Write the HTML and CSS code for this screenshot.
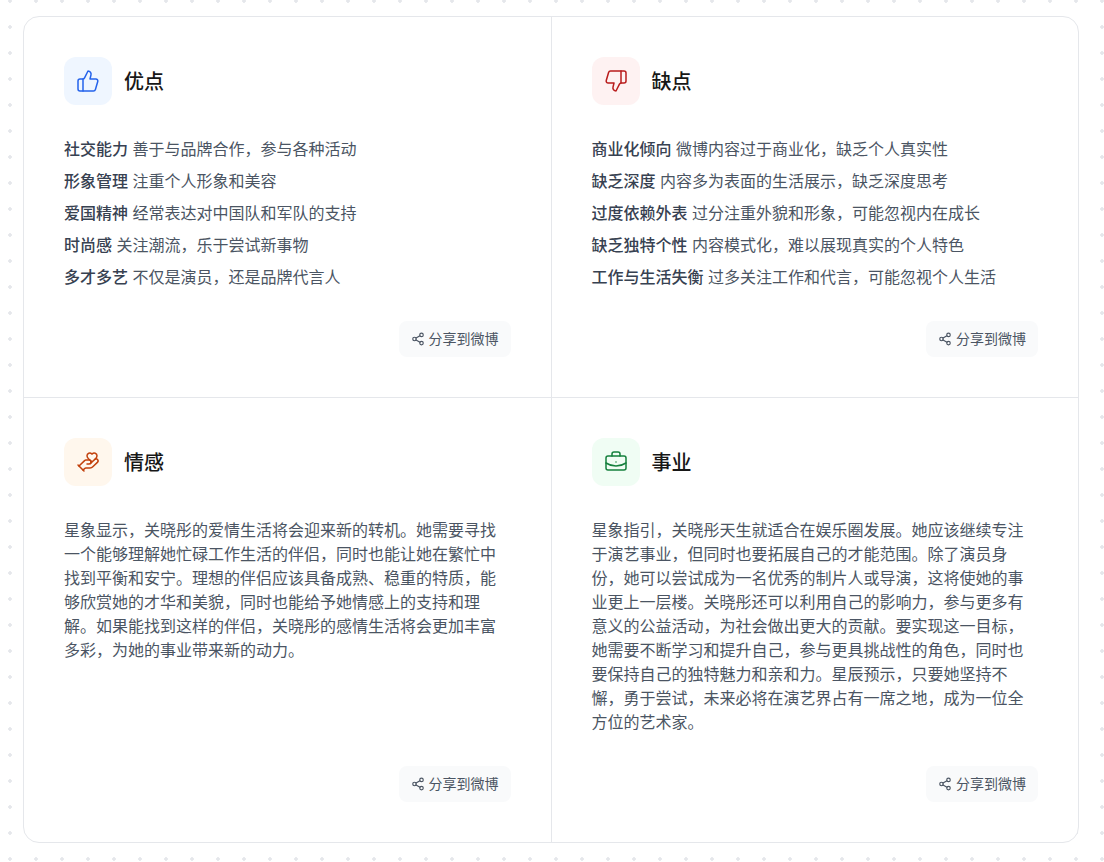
FILE: index.html
```html
<!DOCTYPE html>
<html lang="zh-CN">
<head>
<meta charset="utf-8">
<title>星象分析</title>
<link rel="stylesheet" href="styles.css">
</head>
<body>
<main class="card">
  <section class="cell cell-r cell-b">
    <header class="head">
      <span class="badge badge-blue">
        <svg class="icon" viewBox="0 0 24 24" fill="none" stroke="currentColor" stroke-width="1.5" stroke-linecap="round" stroke-linejoin="round"><path d="M7 10v12"/><path d="M15 5.88 14 10h5.83a2 2 0 0 1 1.92 2.56l-2.33 8A2 2 0 0 1 17.5 22H4a2 2 0 0 1-2-2v-8a2 2 0 0 1 2-2h2.76a2 2 0 0 0 1.79-1.11L12 2a3.13 3.13 0 0 1 3 3.88Z"/></svg>
      </span>
      <h2 class="title">优点</h2>
    </header>
    <ul class="list">
      <li><b>社交能力</b> 善于与品牌合作，参与各种活动</li>
      <li><b>形象管理</b> 注重个人形象和美容</li>
      <li><b>爱国精神</b> 经常表达对中国队和军队的支持</li>
      <li><b>时尚感</b> 关注潮流，乐于尝试新事物</li>
      <li><b>多才多艺</b> 不仅是演员，还是品牌代言人</li>
    </ul>
    <div class="foot"><button class="share"><svg class="share-icon" viewBox="0 0 24 24" fill="none" stroke="currentColor" stroke-width="2" stroke-linecap="round" stroke-linejoin="round"><circle cx="18" cy="5" r="3"/><circle cx="6" cy="12" r="3"/><circle cx="18" cy="19" r="3"/><path d="m8.59 13.51 6.83 3.98"/><path d="m15.41 6.51-6.82 3.98"/></svg>分享到微博</button></div>
  </section>
  <section class="cell cell-b">
    <header class="head">
      <span class="badge badge-red">
        <svg class="icon" viewBox="0 0 24 24" fill="none" stroke="currentColor" stroke-width="1.5" stroke-linecap="round" stroke-linejoin="round"><path d="M17 14V2"/><path d="M9 18.12 10 14H4.17a2 2 0 0 1-1.92-2.56l2.33-8A2 2 0 0 1 6.5 2H20a2 2 0 0 1 2 2v8a2 2 0 0 1-2 2h-2.76a2 2 0 0 0-1.79 1.11L12 22a3.13 3.13 0 0 1-3-3.88Z"/></svg>
      </span>
      <h2 class="title">缺点</h2>
    </header>
    <ul class="list">
      <li><b>商业化倾向</b> 微博内容过于商业化，缺乏个人真实性</li>
      <li><b>缺乏深度</b> 内容多为表面的生活展示，缺乏深度思考</li>
      <li><b>过度依赖外表</b> 过分注重外貌和形象，可能忽视内在成长</li>
      <li><b>缺乏独特个性</b> 内容模式化，难以展现真实的个人特色</li>
      <li><b>工作与生活失衡</b> 过多关注工作和代言，可能忽视个人生活</li>
    </ul>
    <div class="foot"><button class="share"><svg class="share-icon" viewBox="0 0 24 24" fill="none" stroke="currentColor" stroke-width="2" stroke-linecap="round" stroke-linejoin="round"><circle cx="18" cy="5" r="3"/><circle cx="6" cy="12" r="3"/><circle cx="18" cy="19" r="3"/><path d="m8.59 13.51 6.83 3.98"/><path d="m15.41 6.51-6.82 3.98"/></svg>分享到微博</button></div>
  </section>
  <section class="cell cell-r">
    <header class="head">
      <span class="badge badge-orange">
        <svg class="icon" viewBox="0 0 24 24" fill="none" stroke="currentColor" stroke-width="1.5" stroke-linecap="round" stroke-linejoin="round"><path d="M11 14h2a2 2 0 0 0 0-4h-3c-.6 0-1.1.2-1.4.6L3 16"/><path d="m14.45 13.39 5.05-4.694C20.196 8 21 6.85 21 5.75a2.75 2.75 0 0 0-4.797-1.837.276.276 0 0 1-.406 0A2.75 2.75 0 0 0 11 5.75c0 1.2.802 2.248 1.5 2.946L16 11.95"/><path d="m2 15 6 6"/><path d="m7 20 1.6-1.4c.3-.4.8-.6 1.4-.6h4c1.1 0 2.1-.4 2.8-1.2l4.6-4.4a1 1 0 0 0-2.75-2.91"/></svg>
      </span>
      <h2 class="title">情感</h2>
    </header>
    <p class="text">星象显示，关晓彤的爱情生活将会迎来新的转机。她需要寻找一个能够理解她忙碌工作生活的伴侣，同时也能让她在繁忙中找到平衡和安宁。理想的伴侣应该具备成熟、稳重的特质，能够欣赏她的才华和美貌，同时也能给予她情感上的支持和理解。如果能找到这样的伴侣，关晓彤的感情生活将会更加丰富多彩，为她的事业带来新的动力。</p>
    <div class="foot"><button class="share"><svg class="share-icon" viewBox="0 0 24 24" fill="none" stroke="currentColor" stroke-width="2" stroke-linecap="round" stroke-linejoin="round"><circle cx="18" cy="5" r="3"/><circle cx="6" cy="12" r="3"/><circle cx="18" cy="19" r="3"/><path d="m8.59 13.51 6.83 3.98"/><path d="m15.41 6.51-6.82 3.98"/></svg>分享到微博</button></div>
  </section>
  <section class="cell">
    <header class="head">
      <span class="badge badge-green">
        <svg class="icon" viewBox="0 0 24 24" fill="none" stroke="currentColor" stroke-width="1.5" stroke-linecap="round" stroke-linejoin="round"><path d="M12 12h.01"/><path d="M16 6V4a2 2 0 0 0-2-2h-4a2 2 0 0 0-2 2v2"/><path d="M22 13a18.15 18.15 0 0 1-20 0"/><rect width="20" height="14" x="2" y="6" rx="2"/></svg>
      </span>
      <h2 class="title">事业</h2>
    </header>
    <p class="text">星象指引，关晓彤天生就适合在娱乐圈发展。她应该继续专注于演艺事业，但同时也要拓展自己的才能范围。除了演员身份，她可以尝试成为一名优秀的制片人或导演，这将使她的事业更上一层楼。关晓彤还可以利用自己的影响力，参与更多有意义的公益活动，为社会做出更大的贡献。要实现这一目标，她需要不断学习和提升自己，参与更具挑战性的角色，同时也要保持自己的独特魅力和亲和力。星辰预示，只要她坚持不懈，勇于尝试，未来必将在演艺界占有一席之地，成为一位全方位的艺术家。</p>
    <div class="foot"><button class="share"><svg class="share-icon" viewBox="0 0 24 24" fill="none" stroke="currentColor" stroke-width="2" stroke-linecap="round" stroke-linejoin="round"><circle cx="18" cy="5" r="3"/><circle cx="6" cy="12" r="3"/><circle cx="18" cy="19" r="3"/><path d="m8.59 13.51 6.83 3.98"/><path d="m15.41 6.51-6.82 3.98"/></svg>分享到微博</button></div>
  </section>
</main>
</body>
</html>
```
FILE: styles.css
```css
* { box-sizing: border-box; }
html, body { margin: 0; }
body {
  height: 862px;
  overflow: hidden;
  padding: 16px 25px 0 23px;
  background-color: #fff;
  background-image: radial-gradient(circle, #e5e7eb 1.5px, transparent 2px);
  background-size: 26px 26px;
  background-position: 23px 14px;
  font-family: Inter, "Noto Sans CJK SC", sans-serif;
  color: #4b5563;
}
.card {
  display: grid;
  grid-template-columns: 527.5px 1fr;
  background: #fff;
  border: 1px solid #e5e7eb;
  border-radius: 16px;
}
.cell {
  display: flex;
  flex-direction: column;
  padding: 40px;
}
.cell-r { border-right: 1px solid #e5e7eb; }
.cell-b { border-bottom: 1px solid #e5e7eb; }
.head {
  display: flex;
  align-items: center;
  gap: 12px;
  margin-bottom: 32px;
}
.badge {
  display: flex;
  align-items: center;
  justify-content: center;
  width: 48px;
  height: 48px;
  border-radius: 12px;
}
.badge-blue { background: #eff6ff; color: #2563eb; }
.badge-red { background: #fef2f2; color: #b91c1c; }
.badge-orange { background: #fff7ed; color: #c2410c; }
.badge-green { background: #f0fdf4; color: #15803d; }
.icon { width: 24px; height: 24px; }
.title {
  margin: 0;
  padding-top: 2px;
  font-size: 20px;
  line-height: 28px;
  font-weight: 500;
  color: #171717;
}
.list {
  display: flex;
  flex-direction: column;
  gap: 8px;
  margin: 0;
  padding: 0;
  list-style: none;
  font-size: 16px;
  line-height: 24px;
}
.list b { font-weight: 500; color: #374151; }
.text {
  margin: 0;
  font-size: 16px;
  line-height: 24px;
}
.foot {
  display: flex;
  justify-content: flex-end;
  margin-top: auto;
  padding-top: 32px;
}
.share {
  display: flex;
  align-items: center;
  gap: 4px;
  height: 36px;
  padding: 0 12px;
  border: 0;
  border-radius: 8px;
  background: #f9fafb;
  color: #4b5563;
  font: 14px/20px Inter, "Noto Sans CJK SC", sans-serif;
}
.share-icon { width: 14px; height: 14px; }
```
